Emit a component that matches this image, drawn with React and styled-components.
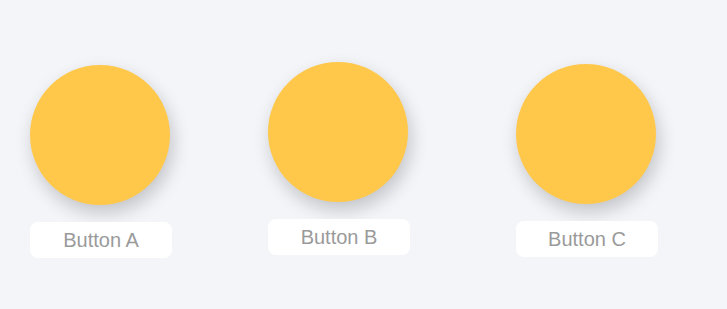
import React from 'react';
import styled, { createGlobalStyle } from 'styled-components';

const GlobalStyle = createGlobalStyle`
  html, body {
    margin: 0;
    padding: 0;
    background: #f4f5f9;
    font-family: "Liberation Sans", Arial, sans-serif;
  }
`;

const Stage = styled.div`
  display: flex;
  align-items: flex-start;
  width: 727px;
  height: 309px;
  padding: 62px 0 0 30px;
  box-sizing: border-box;
  background: #f4f5f9;
  overflow: hidden;
`;

const Item = styled.div`
  display: flex;
  flex-direction: column;
  align-items: flex-start;
  gap: 17px;
  margin-left: ${props => props.left}px;
  margin-top: ${props => props.top}px;
`;

const Ball = styled.div`
  width: 140px;
  height: 140px;
  border-radius: 50%;
  background: #ffc84b;
  box-shadow: 3px 8px 18px rgba(0, 0, 0, 0.2);
`;

const Label = styled.div`
  display: flex;
  align-items: center;
  justify-content: center;
  width: 142px;
  height: 36px;
  border-radius: 8px;
  background: #ffffff;
  color: #9a9a9a;
  font-size: 20px;
`;

const buttons = [
  { name: 'Button A', left: 0, top: 3 },
  { name: 'Button B', left: 96, top: 0 },
  { name: 'Button C', left: 106, top: 2 },
];

export default function App() {
  return (
    <>
      <GlobalStyle />
      <Stage>
        {buttons.map(b => (
          <Item key={b.name} left={b.left} top={b.top}>
            <Ball />
            <Label>{b.name}</Label>
          </Item>
        ))}
      </Stage>
    </>
  );
}
